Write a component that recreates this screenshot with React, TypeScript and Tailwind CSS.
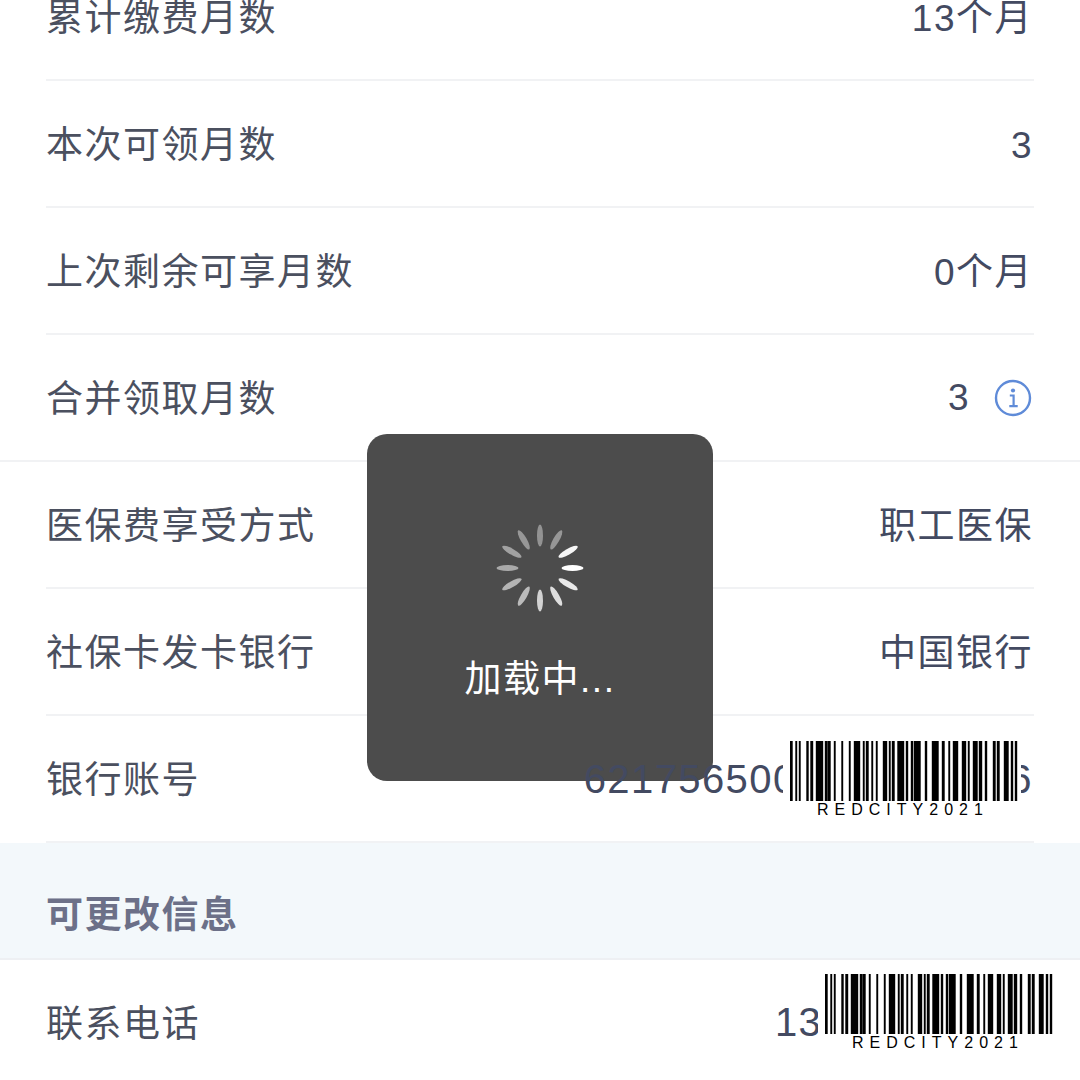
import type { ReactNode } from "react";

const bars: [number, number][] = [
	[0, 2.5], [5.5, 1.5], [9, 1.5], [16.5, 2], [20.5, 2.5], [26, 7], [35, 2.5], [38, 2.5], [44, 1.5], [51.5, 1.5], [59, 1.5], [64, 6], [73, 1.5],
	[76, 2.5], [81.5, 1.5], [86, 1.5], [93, 4], [99, 1.5], [102, 2.5], [107.5, 6.5], [116, 2], [121, 2], [124, 6.5], [135, 2], [142, 6.5],
	[152, 2.5], [158.5, 1.5], [163, 5], [172, 4], [178, 1.5], [183, 4.5], [189, 3], [195, 2], [203, 2.5], [207, 2.5], [214, 4.5], [221, 2], [225, 2],
];

// clockwise from 12 o'clock
const spokes = [0.4, 0.42, 0.95, 1, 0.88, 0.82, 0.75, 0.62, 0.58, 0.52, 0.48, 0.42];

function Row({ label, children, full }: { label: string; children: ReactNode; full?: boolean }) {
	return (
		<div className={full ? "border-b-2 border-[#f1f2f4]" : ""}>
			<div className={`mx-[46px] flex items-center justify-between pt-[4px] pr-px ${full ? "h-[125px]" : "h-[127px] border-b-2 border-[#f1f2f4]"}`}>
				<span className="text-[#4b505f]">{label}</span>
				{children}
			</div>
		</div>
	);
}

function Value({ children }: { children: ReactNode }) {
	return <span className="text-[#434a61]">{children}</span>;
}

function InfoIcon() {
	return (
		<svg width="38" height="38" viewBox="0 0 38 38" fill="none" className="mr-px">
			<circle cx="19" cy="19" r="17" stroke="#5f8bd8" strokeWidth="2.4" />
			<circle cx="19" cy="11.5" r="2.1" fill="#5f8bd8" />
			<path d="M15.8 16.5h3.8v10.5M15.3 27.2h8.4" stroke="#5f8bd8" strokeWidth="2.2" />
		</svg>
	);
}

function Barcode({ className }: { className: string }) {
	return (
		<div className={`absolute z-30 w-[238px] h-[82px] bg-white pl-[7px] pt-[3px] ${className}`}>
			<svg width="228" height="60" viewBox="0 0 228 60" className="block">
				{bars.map(([x, w]) => (
					<rect key={x} x={x - 0.2} y="0" width={w + 0.4} height="60" fill="#000" />
				))}
			</svg>
			<div className="pl-[27px] text-[16px] leading-[18px] tracking-[6px] text-black font-['Liberation_Sans',sans-serif]">
				REDCITY2021
			</div>
		</div>
	);
}

export default function App() {
	return (
		<div className="relative h-[1080px] w-[1080px] overflow-hidden bg-white text-[37px] tracking-[1.5px] font-['Liberation_Sans','Noto_Sans_CJK_SC',sans-serif]">
			<div className="-mt-[46px]">
				<Row label="累计缴费月数"><Value>13个月</Value></Row>
				<Row label="本次可领月数"><Value>3</Value></Row>
				<Row label="上次剩余可享月数"><Value>0个月</Value></Row>
				<Row label="合并领取月数" full>
					<div className="flex items-center gap-[24px] mb-[3px]">
						<Value>3</Value>
						<InfoIcon />
					</div>
				</Row>
				<Row label="医保费享受方式"><Value>职工医保</Value></Row>
				<Row label="社保卡发卡银行"><Value>中国银行</Value></Row>
				<Row label="银行账号">
					<span className="relative z-20 mb-[4px] text-[40px] tracking-[1.4px] text-[#434a61]">6217565000000000006</span>
				</Row>

				<div className="h-[117px] flex items-center px-[46px] pt-[30px] bg-[#f3f8fb] border-b-2 border-[#eef0f3]">
					<span className="font-bold text-[#6c7088]">可更改信息</span>
				</div>

				<Row label="联系电话">
					<span className="mb-[6px] text-[40px] tracking-[1.2px] text-[#434a61]">13000000000</span>
				</Row>
			</div>

			{/* loading toast */}
			<div className="absolute z-10 left-[367px] top-[434px] w-[346px] h-[347px] rounded-[20px] bg-[#4c4c4c] flex flex-col items-center pt-[90px]">
				<svg width="88" height="88" viewBox="-44 -44 88 88">
					{spokes.map((o, i) => (
						<ellipse
							key={i}
							cx="0"
							cy="-32.5"
							rx="3"
							ry="11"
							fill="#fff"
							opacity={o}
							transform={`rotate(${i * 30})`}
						/>
					))}
				</svg>
				<div className="mt-[40px] text-white">加载中...</div>
			</div>

			<Barcode className="left-[783px] top-[738px]" />
			<Barcode className="left-[818px] top-[971px]" />
		</div>
	);
}
